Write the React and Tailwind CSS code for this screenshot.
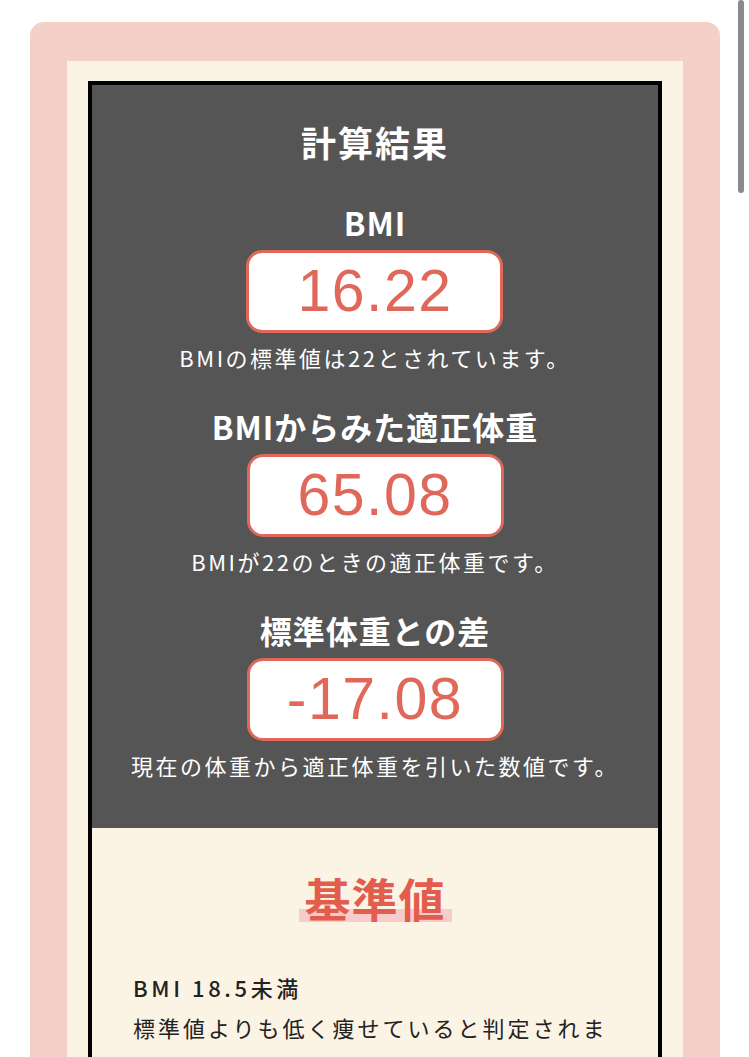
import React from 'react';

// 計算結果の各項目
const results = [
  { label: 'BMI', value: '16.22', note: 'BMIの標準値は22とされています。' },
  { label: 'BMIからみた適正体重', value: '65.08', note: 'BMIが22のときの適正体重です。' },
  { label: '標準体重との差', value: '-17.08', note: '現在の体重から適正体重を引いた数値です。' },
];

const jp = { fontFamily: '"Noto Sans CJK JP", "Noto Sans", sans-serif' };

const ResultBlock = ({ label, value, note, first }) => (
  <div className={`flex flex-col items-center ${first ? 'mt-[36px]' : 'mt-[34px]'}`}>
    <h3 className="text-[32px] font-bold leading-[40px] tracking-[1px] text-white">{label}</h3>
    <div className="mt-[8px] flex h-[83px] w-[257px] items-center justify-center rounded-[16px] border-[3px] border-[#e0685a] bg-white">
      <span
        className="text-[59px] font-normal leading-none tracking-[1.5px] text-[#e0685a]"
        style={{ fontFamily: '"Liberation Sans", Arial, sans-serif' }}
      >
        {value}
      </span>
    </div>
    <p className="mt-[9px] text-[22px] leading-[30px] tracking-[2.5px] text-white">{note}</p>
  </div>
);

const App = () => {
  return (
    <div className="relative h-[1057px] overflow-hidden bg-white" style={jp}>
      {/* スクロールバー */}
      <div className="absolute right-[5px] top-0 h-[193px] w-[6px] rounded-full bg-[#8a8a8a]" />

      <div className="ml-[30px] mt-[22px] w-[690px] rounded-t-[14px] bg-[#f5d0c8] px-[37px] pt-[39px]">
        <div className="bg-[#fbf3e3] px-[21px] pt-[20px]">
          <div className="border-[4px] border-b-0 border-black">
            {/* 計算結果 */}
            <section className="flex flex-col items-center bg-[#555555] pb-[48px] pt-[33px]">
              <h2 className="text-[35px] font-bold leading-[48px] tracking-[2px] text-white">計算結果</h2>
              {results.map((r, i) => (
                <ResultBlock key={r.label} {...r} first={i === 0} />
              ))}
            </section>

            {/* 基準値 */}
            <section className="bg-[#fbf3e3] px-[41px] pt-[39px] pb-[20px]">
              <div className="flex justify-center">
                <h2 className="relative text-[46px] font-bold leading-[60px] tracking-[1px] text-[#e35d4e]">
                  <span className="absolute -left-[6px] -right-[6px] bottom-[5px] h-[13px] bg-[#f8cccc]" />
                  <span className="relative">基準値</span>
                </h2>
              </div>
              <div className="mt-[40px] text-[22px] leading-[40px] tracking-[3px] text-[#222]">
                <p className="font-medium tracking-[3.6px]">BMI 18.5未満</p>
                <p>標準値よりも低く痩せていると判定されます。</p>
              </div>
            </section>
          </div>
        </div>
      </div>
    </div>
  );
};

export default App;
